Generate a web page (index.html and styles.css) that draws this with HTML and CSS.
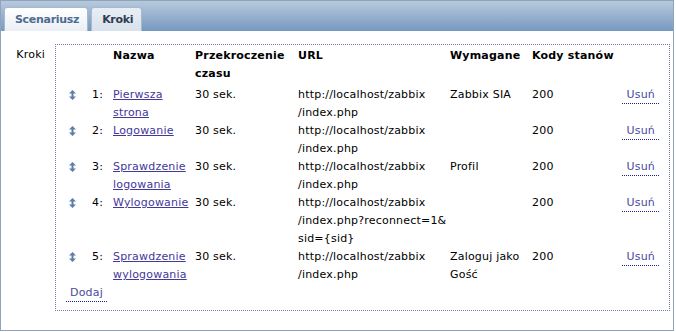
FILE: index.html
```html
<!DOCTYPE html>
<html lang="pl">
<head>
    <meta charset="UTF-8">
    <title>Kroki</title>
    <link rel="stylesheet" href="styles.css">
</head>
<body>
    <div class="frame">
        <div class="tabs">
            <span class="tab">Scenariusz</span>
            <span class="tab active">Kroki</span>
        </div>
        <div class="content">
            <div class="form-label">Kroki</div>
            <div class="steps-box">
                <table class="steps">
                    <colgroup>
                        <col class="c-drag"><col class="c-num"><col class="c-name"><col class="c-time">
                        <col class="c-url"><col class="c-req"><col class="c-codes"><col class="c-act">
                    </colgroup>
                    <tr class="head">
                        <th></th>
                        <th></th>
                        <th>Nazwa</th>
                        <th>Przekroczenie czasu</th>
                        <th>URL</th>
                        <th>Wymagane</th>
                        <th class="nowrap">Kody stanów</th>
                        <th></th>
                    </tr>
                    <tr>
                        <td class="drag"><svg width="7" height="10" viewBox="0 0 7 10"><path d="M3.5 0L7 3.5H4.5V6.5H7L3.5 10L0 6.5H2.5V3.5H0Z"/></svg></td>
                        <td class="num">1:</td>
                        <td><a class="link" href="#">Pierwsza strona</a></td>
                        <td>30 sek.</td>
                        <td>http://localhost/zabbix<br>/index.php</td>
                        <td>Zabbix SIA</td>
                        <td>200</td>
                        <td class="act"><a class="action" href="#">Usuń</a></td>
                    </tr>
                    <tr>
                        <td class="drag"><svg width="7" height="10" viewBox="0 0 7 10"><path d="M3.5 0L7 3.5H4.5V6.5H7L3.5 10L0 6.5H2.5V3.5H0Z"/></svg></td>
                        <td class="num">2:</td>
                        <td><a class="link" href="#">Logowanie</a></td>
                        <td>30 sek.</td>
                        <td>http://localhost/zabbix<br>/index.php</td>
                        <td></td>
                        <td>200</td>
                        <td class="act"><a class="action" href="#">Usuń</a></td>
                    </tr>
                    <tr>
                        <td class="drag"><svg width="7" height="10" viewBox="0 0 7 10"><path d="M3.5 0L7 3.5H4.5V6.5H7L3.5 10L0 6.5H2.5V3.5H0Z"/></svg></td>
                        <td class="num">3:</td>
                        <td><a class="link" href="#">Sprawdzenie logowania</a></td>
                        <td>30 sek.</td>
                        <td>http://localhost/zabbix<br>/index.php</td>
                        <td>Profil</td>
                        <td>200</td>
                        <td class="act"><a class="action" href="#">Usuń</a></td>
                    </tr>
                    <tr>
                        <td class="drag"><svg width="7" height="10" viewBox="0 0 7 10"><path d="M3.5 0L7 3.5H4.5V6.5H7L3.5 10L0 6.5H2.5V3.5H0Z"/></svg></td>
                        <td class="num">4:</td>
                        <td><a class="link" href="#">Wylogowanie</a></td>
                        <td>30 sek.</td>
                        <td>http://localhost/zabbix<br>/index.php?reconnect=1&amp;<br>sid={sid}</td>
                        <td></td>
                        <td>200</td>
                        <td class="act"><a class="action" href="#">Usuń</a></td>
                    </tr>
                    <tr>
                        <td class="drag"><svg width="7" height="10" viewBox="0 0 7 10"><path d="M3.5 0L7 3.5H4.5V6.5H7L3.5 10L0 6.5H2.5V3.5H0Z"/></svg></td>
                        <td class="num">5:</td>
                        <td><a class="link" href="#">Sprawdzenie wylogowania</a></td>
                        <td>30 sek.</td>
                        <td>http://localhost/zabbix<br>/index.php</td>
                        <td>Zaloguj jako Gość</td>
                        <td>200</td>
                        <td class="act"><a class="action" href="#">Usuń</a></td>
                    </tr>
                </table>
                <div class="add-row"><a class="action" href="#">Dodaj</a></div>
            </div>
        </div>
    </div>
</body>
</html>
```

FILE: styles.css
```css
body {
    margin: 0;
    background: #fff;
    font-family: 'DejaVu Sans', Verdana, sans-serif;
    font-size: 11px;
    line-height: 18px;
    letter-spacing: 0.2px;
    color: #000;
}
.frame {
    width: 674px;
    height: 331px;
    box-sizing: border-box;
    border: 1px solid #8ea4be;
    background: #fff;
}
.tabs {
    height: 30px;
    box-sizing: border-box;
    background: linear-gradient(#b8c9dc, #7699c1);
    display: flex;
    align-items: flex-end;
    padding-left: 3px;
    gap: 3px;
}
.tab {
    height: 24px;
    box-sizing: border-box;
    padding: 0 8px 0 10px;
    line-height: 24px;
    letter-spacing: -0.3px;
    font-weight: bold;
    color: #4c6b91;
    background: linear-gradient(#ffffff, #eaeff5);
    border: 1px solid #a7b9ce;
    border-bottom: none;
    border-radius: 3px 3px 0 0;
}
.tab.active {
    padding: 0 8px 0 10px;
    color: #2e3d52;
    background: linear-gradient(#e9eef4, #d8e1ec);
}
.content {
    display: flex;
    padding-top: 13px;
}
.form-label {
    width: 44px;
    padding-right: 10px;
    padding-top: 2px;
    text-align: right;
}
.steps-box {
    width: 615px;
    height: 267px;
    box-sizing: border-box;
    border: 1px dotted #6b7cae;
    padding-top: 2px;
}
.steps {
    border-collapse: collapse;
    table-layout: fixed;
    width: 612px;
}
.c-drag { width: 33px; }
.c-num { width: 21px; }
.c-name { width: 82px; }
.c-time { width: 103px; }
.c-url { width: 152px; }
.c-req { width: 82px; }
.c-codes { width: 80px; }
.c-act { width: 59px; }
.steps th, .steps td {
    padding: 0 0 0 3px;
    text-align: left;
    vertical-align: top;
    font-weight: normal;
}
.steps th {
    font-weight: bold;
    padding-bottom: 3px;
}
.steps th.nowrap {
    white-space: nowrap;
}
.steps td.drag {
    padding-left: 13px;
    padding-top: 4px;
    line-height: 10px;
}
.drag svg {
    fill: #5c7fa7;
}
.steps td.act {
    text-align: right;
    padding-right: 9px;
}
.link {
    color: #43389b;
    text-decoration: underline;
}
.action {
    display: inline-block;
    line-height: 17px;
    padding: 0 4px;
    color: #4a4a9c;
    text-decoration: none;
    border-bottom: 1px dotted #1e1ea0;
}
.add-row {
    padding-left: 10px;
}
```
